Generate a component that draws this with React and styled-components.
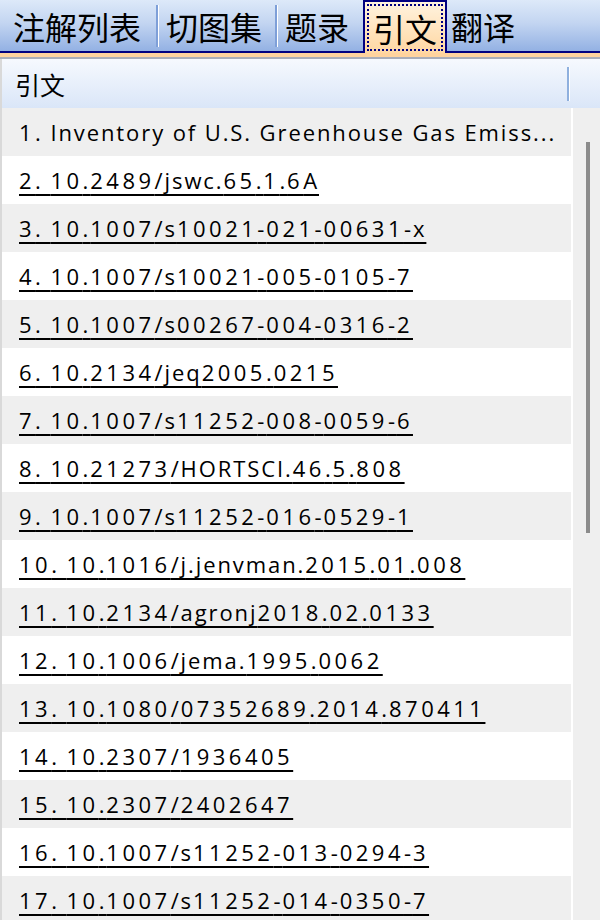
import React from "react";
import styled, { createGlobalStyle } from "styled-components";

const GlobalStyle = createGlobalStyle`
  html, body {
    margin: 0;
    padding: 0;
    background: #ffffff;
  }
  body {
    width: 600px;
    height: 920px;
    overflow: hidden;
    font-family: "Open Sans", "Noto Sans", "Noto Sans CJK SC", sans-serif;
  }
`;

const tabs = ["注解列表", "切图集", "题录", "引文", "翻译"];
const active = 3;

const refs = [
  "1. Inventory of U.S. Greenhouse Gas Emiss...",
  "2. 10.2489/jswc.65.1.6A",
  "3. 10.1007/s10021-021-00631-x",
  "4. 10.1007/s10021-005-0105-7",
  "5. 10.1007/s00267-004-0316-2",
  "6. 10.2134/jeq2005.0215",
  "7. 10.1007/s11252-008-0059-6",
  "8. 10.21273/HORTSCI.46.5.808",
  "9. 10.1007/s11252-016-0529-1",
  "10. 10.1016/j.jenvman.2015.01.008",
  "11. 10.2134/agronj2018.02.0133",
  "12. 10.1006/jema.1995.0062",
  "13. 10.1080/07352689.2014.870411",
  "14. 10.2307/1936405",
  "15. 10.2307/2402647",
  "16. 10.1007/s11252-013-0294-3",
  "17. 10.1007/s11252-014-0350-7",
];

const Page = styled.div`
  width: 600px;
  height: 920px;
  display: flex;
  flex-direction: column;
  overflow: hidden;
`;

const TabBar = styled.div`
  height: 51px;
  flex: none;
  display: flex;
  align-items: flex-end;
  padding-left: 6px;
  background: linear-gradient(#dde9f9, #c3d5f1 45%, #93b1e3);
  border-bottom: 2px solid #000080;
`;

const Tab = styled.div`
  height: 51px;
  display: flex;
  align-items: center;
  padding: 0 7px;
  font-family: "Noto Sans CJK SC", sans-serif;
  font-size: 32px;
  line-height: 1;
  color: #000;
  margin-left: ${(p) => p.$ml || 0}px;
`;

const ActiveTab = styled.div`
  height: 47px;
  margin-left: 7px;
  margin-bottom: -2px;
  padding: 2px;
  display: flex;
  background: linear-gradient(#fff3df, #ffd7a2);
  border: 2px solid #000080;
  border-bottom: none;
`;

const Focus = styled.div`
  flex: 1;
  display: flex;
  align-items: center;
  padding: 0 4px;
  border: 2px dotted #000080;
  font-family: "Noto Sans CJK SC", sans-serif;
  font-size: 32px;
  line-height: 1;
  color: #000;
`;

const Sep = styled.div`
  width: 2px;
  height: 42px;
  align-self: center;
  background: #7e9fd8;
  border-right: 1px solid #ffffff;
  margin-left: ${(p) => p.$ml}px;
`;

const Strip = styled.div`
  flex: none;
  height: 4px;
  background: #ffd39e;
  border-bottom: 2px solid #a9aeba;
`;

const Panel = styled.div`
  flex: 1;
  display: flex;
  flex-direction: column;
  border-left: 2px solid #d9d9d9;
  min-height: 0;
`;

const Header = styled.div`
  flex: none;
  height: 49px;
  display: flex;
  align-items: center;
  justify-content: space-between;
  padding-left: 13px;
  background: linear-gradient(#f6f9fe, #dae6f8);
`;

const HeaderText = styled.span`
  font-family: "Noto Sans CJK SC", sans-serif;
  font-size: 25px;
  color: #000;
`;

const HeaderDivider = styled.div`
  width: 2px;
  height: 34px;
  background: #8fb0de;
  border-right: 1px solid #fff;
  margin-right: 30px;
`;

const Body = styled.div`
  flex: 1;
  display: flex;
  min-height: 0;
`;

const List = styled.div`
  flex: 1;
  display: flex;
  flex-direction: column;
  margin-right: 2px;
`;

const Row = styled.div`
  flex: none;
  height: 48px;
  display: flex;
  align-items: center;
  padding-left: 17px;
  background: ${(p) => (p.$odd ? "#efefef" : "#ffffff")};
  font-size: 22px;
  letter-spacing: 1.9px;
  color: #000;
  white-space: nowrap;
  overflow: hidden;
`;

const LinkText = styled.span`
  text-decoration: ${(p) => (p.$link ? "underline" : "none")};
  text-decoration-thickness: 2px;
  text-underline-offset: 5px;
`;

const Digits = styled.span`
  letter-spacing: 3.5px;
`;

const Track = styled.div`
  width: 27px;
  flex: none;
  background: #efefef;
  padding-top: 34px;
  display: flex;
  justify-content: center;
`;

const Thumb = styled.div`
  width: 4px;
  height: 391px;
  margin-left: 2px;
  background: #8b8b8b;
`;

// digits in the source font are set wider than letters
const spaced = (text) =>
  text.split(/(\d+)/).map((part, i) =>
    /^\d+$/.test(part) ? <Digits key={i}>{part}</Digits> : part
  );

const App = () => {
  return (
    <Page>
      <GlobalStyle />
      <TabBar>
        <Tab>{tabs[0]}</Tab>
        <Sep $ml={8} />
        <Tab>{tabs[1]}</Tab>
        <Sep $ml={6} />
        <Tab>{tabs[2]}</Tab>
        <ActiveTab>
          <Focus>{tabs[active]}</Focus>
        </ActiveTab>
        <Tab $ml={-3}>{tabs[4]}</Tab>
      </TabBar>
      <Strip />
      <Panel>
        <Header>
          <HeaderText>引文</HeaderText>
          <HeaderDivider />
        </Header>
        <Body>
          <List>
            {refs.map((r, i) => (
              <Row key={i} $odd={i % 2 === 0}>
                <LinkText $link={i > 0}>{spaced(r)}</LinkText>
              </Row>
            ))}
          </List>
          <Track>
            <Thumb />
          </Track>
        </Body>
      </Panel>
    </Page>
  );
};

export default App;
